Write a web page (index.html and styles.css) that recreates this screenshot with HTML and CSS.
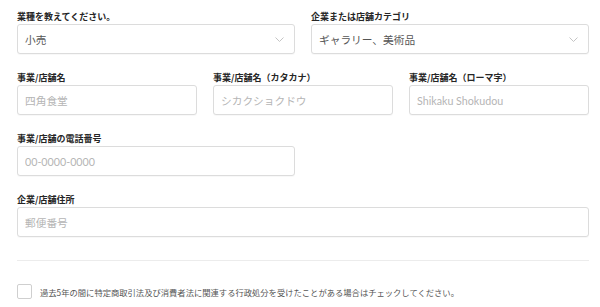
FILE: index.html
```html
<!DOCTYPE html>
<html lang="ja">
<head>
<meta charset="utf-8">
<link rel="stylesheet" href="styles.css">
</head>
<body>
<form class="form">
  <div class="row row-2">
    <div class="field">
      <div class="label">業種を教えてください。</div>
      <div class="select">
        <span class="value">小売</span>
        <svg class="chev" width="9" height="5" viewBox="0 0 9 5"><path d="M0.5 0.5 L4.5 4.5 L8.5 0.5" fill="none" stroke="#c4c4c4" stroke-width="1"/></svg>
      </div>
    </div>
    <div class="field">
      <div class="label">企業または店舗カテゴリ</div>
      <div class="select">
        <span class="value">ギャラリー、美術品</span>
        <svg class="chev" width="9" height="5" viewBox="0 0 9 5"><path d="M0.5 0.5 L4.5 4.5 L8.5 0.5" fill="none" stroke="#c4c4c4" stroke-width="1"/></svg>
      </div>
    </div>
  </div>
  <div class="row row-3">
    <div class="field">
      <div class="label">事業/店舗名</div>
      <input class="input" type="text" placeholder="四角食堂">
    </div>
    <div class="field">
      <div class="label">事業/店舗名（カタカナ）</div>
      <input class="input" type="text" placeholder="シカクショクドウ">
    </div>
    <div class="field">
      <div class="label">事業/店舗名（ローマ字）</div>
      <input class="input" type="text" placeholder="Shikaku Shokudou">
    </div>
  </div>
  <div class="row row-2">
    <div class="field">
      <div class="label">事業/店舗の電話番号</div>
      <input class="input" type="text" placeholder="00-0000-0000">
    </div>
  </div>
  <div class="row">
    <div class="field">
      <div class="label">企業/店舗住所</div>
      <input class="input" type="text" placeholder="郵便番号">
    </div>
  </div>
  <hr class="divider">
  <label class="check">
    <span class="box"></span>
    <span class="check-text">過去5年の間に特定商取引法及び消費者法に関連する行政処分を受けたことがある場合はチェックしてください。</span>
  </label>
</form>
</body>
</html>
```
FILE: styles.css
```css
html, body {
  margin: 0;
  padding: 0;
  background: #ffffff;
}
body {
  font-family: Lato, "Noto Sans CJK JP", sans-serif;
  color: #333;
}
.form {
  width: 572px;
  padding: 11px 0 0 17px;
  display: flex;
  flex-direction: column;
  gap: 18px;
}
.row {
  display: grid;
  grid-template-columns: 1fr;
  column-gap: 16px;
}
.row-2 {
  grid-template-columns: 1fr 1fr;
}
.row-3 {
  grid-template-columns: 1fr 1fr 1fr;
}
.field {
  display: flex;
  flex-direction: column;
  min-width: 0;
}
.label {
  font-family: "Noto Sans CJK JP", sans-serif;
  font-size: 9px;
  font-weight: 700;
  line-height: 12px;
  color: #262626;
  margin-bottom: 1px;
  white-space: nowrap;
}
.select, .input {
  box-sizing: border-box;
  height: 30px;
  border: 1px solid #dcdcdc;
  border-radius: 3px;
  background: #fff;
  font-family: Lato, "Noto Sans CJK JP", sans-serif;
  font-size: 10.7px;
  padding: 0 7px;
  margin: 0;
  width: 100%;
  outline: none;
  box-shadow: 0 1px 1px rgba(0,0,0,0.03);
}
.select {
  display: flex;
  align-items: center;
  justify-content: space-between;
  padding-right: 10px;
}
.value {
  color: #555;
}
.chev {
  display: block;
}
.input {
  color: #555;
}
.input::placeholder {
  color: #b5b5b5;
  opacity: 1;
}
.divider {
  border: none;
  border-top: 1px solid #ececec;
  margin: 5px 0 0;
  height: 0;
}
.check {
  display: flex;
  align-items: center;
  gap: 8px;
  margin-top: 5px;
}
.box {
  box-sizing: border-box;
  width: 15px;
  height: 15px;
  border: 1px solid #cfcfcf;
  border-radius: 2px;
  background: #fff;
  flex: none;
}
.check-text {
  font-family: "Noto Sans CJK JP", sans-serif;
  font-size: 8.3px;
  color: #555;
  white-space: nowrap;
}
```
